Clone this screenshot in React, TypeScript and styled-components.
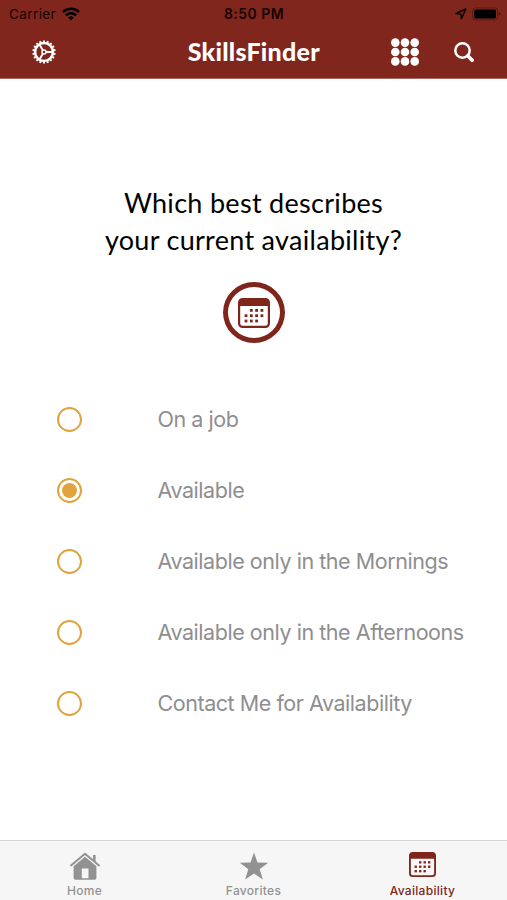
import React, { useState } from "react";
import styled, { createGlobalStyle } from "styled-components";

const OPTIONS = [
  "On a job",
  "Available",
  "Available only in the Mornings",
  "Available only in the Afternoons",
  "Contact Me for Availability",
];

const GearIcon: React.FC = () => {
  const teeth = Array.from({ length: 18 }, (_, i) => i * 20);
  return (
    <svg width="26" height="26" viewBox="-13 -13 26 26" fill="none" stroke="#fff">
      <circle r="8.9" strokeWidth="2.5" />
      {teeth.map((angle) => (
        <path key={angle} d="M0-9.5V-11.6" strokeWidth="2" transform={`rotate(${angle})`} />
      ))}
      <circle r="2" strokeWidth="1.5" />
      <path d="M2 0H9M-1.2-1.8L-4.7-7.7M-1.2 1.8L-4.7 7.7" strokeWidth="1.9" />
    </svg>
  );
};

const GridIcon: React.FC = () => (
  <svg width="30" height="30" viewBox="-15 -15 30 30" fill="#fff">
    {[-9.4, 0, 9.4].map((y) =>
      [-9.7, 0, 9.7].map((x) => <circle key={`${x},${y}`} cx={x} cy={y} r="4.3" />)
    )}
  </svg>
);

const SearchIcon: React.FC = () => (
  <svg width="22" height="22" viewBox="0 0 22 22" fill="none" stroke="#fff">
    <circle cx="9.5" cy="9.5" r="7.2" strokeWidth="2.5" />
    <path d="M14.7 14.7L19.2 19.2" strokeWidth="3.6" strokeLinecap="round" />
  </svg>
);

const WifiIcon: React.FC = () => (
  <svg width="18" height="14" viewBox="0 0 18 14" fill="none" stroke="#000" strokeWidth="2.5">
    <path d="M1 5.1A11.3 11.3 0 0 1 17 5.1" />
    <path d="M3.9 8.3A7.2 7.2 0 0 1 14.1 8.3" />
    <path d="M9 13.6L6.2 10.7A4 4 0 0 1 11.8 10.7Z" fill="#000" stroke="none" />
  </svg>
);

const LocationIcon: React.FC = () => (
  <svg width="12" height="12" viewBox="0 0 12 12" fill="none" stroke="#000" strokeWidth="1.4">
    <path d="M1 5.5L10.8 1L6.4 10.7L5.9 6.1Z" strokeLinejoin="round" />
  </svg>
);

const BatteryIcon: React.FC = () => (
  <svg width="30" height="14" viewBox="0 0 30 14">
    <rect x="0.6" y="0.9" width="25" height="12" rx="3" fill="none" stroke="#000" strokeOpacity="0.3" />
    <rect x="2.2" y="2.5" width="21.8" height="8.9" rx="1.6" />
    <path d="M26.7 4.9Q28.6 6 28.6 7T26.7 9.1Z" fillOpacity="0.4" />
  </svg>
);

const CalendarIcon: React.FC<{ width: number; height: number }> = ({ width, height }) => (
  <svg width={width} height={height} viewBox="0 0 32 30" preserveAspectRatio="none" fill="#80251b">
    <rect x="1.1" y="1.1" width="29.8" height="27.8" rx="3.5" fill="none" stroke="#80251b" strokeWidth="2.2" />
    <path d="M1 8V4Q1 1 4 1H28Q31 1 31 4V8Z" />
    {[12.4, 17.7, 23].map((y, row) =>
      [8, 13.3, 18.6, 23.9].map((x, col) =>
        (row === 0 && col === 0) || (row === 2 && col === 3) ? null : (
          <rect key={`${x},${y}`} x={x - 1.4} y={y - 1.4} width="2.8" height="2.8" />
        )
      )
    )}
  </svg>
);

const HomeIcon: React.FC = () => (
  <svg width="32" height="28" viewBox="0 0 32 28" fill="#929292">
    <path d="M2 13.4L16 1.7L30 13.4" fill="none" stroke="#929292" strokeWidth="2" strokeLinecap="round" strokeLinejoin="round" />
    <path d="M24 3H26.6V9.8L24 7.6Z" />
    <path d="M16 4.7L27.4 14.2V26Q27.4 27.8 25.6 27.8H6.4Q4.6 27.8 4.6 26V14.2ZM12.8 16.4V26.3H19.5V16.4Z" fillRule="evenodd" />
  </svg>
);

const StarIcon: React.FC = () => (
  <svg width="30" height="28" viewBox="0 0 30 28" fill="#929292">
    <path d="M15 0.4L18.5 10.6L29.2 10.8L20.7 17.3L23.9 27.6L15 21.4L6.1 27.6L9.3 17.3L0.8 10.8L11.5 10.6Z" />
  </svg>
);

const App: React.FC = () => {
  const [selected, setSelected] = useState<number>(1);

  return (
    <>
      <GlobalStyle />
      <Screen>
        <Header>
          <StatusBar>
            <Carrier>
              Carrier <WifiIcon />
            </Carrier>
            <Clock>8:50 PM</Clock>
            <StatusIcons>
              <LocationIcon />
              <BatteryIcon />
            </StatusIcons>
          </StatusBar>
          <NavBar>
            <NavGroup>
              <IconButton aria-label="Settings"><GearIcon /></IconButton>
            </NavGroup>
            <AppName>SkillsFinder</AppName>
            <NavGroup $end>
              <IconButton aria-label="Menu"><GridIcon /></IconButton>
              <IconButton aria-label="Search"><SearchIcon /></IconButton>
            </NavGroup>
          </NavBar>
        </Header>
        <Main>
          <Question>
            Which best describes
            <br />
            your current availability?
          </Question>
          <Badge>
            <CalendarIcon width={32} height={30} />
          </Badge>
          <OptionList role="radiogroup">
            {OPTIONS.map((label, index) => (
              <Option
                key={label}
                role="radio"
                aria-checked={selected === index}
                onClick={() => setSelected(index)}
              >
                <Radio>{selected === index && <RadioDot />}</Radio>
                <OptionLabel>{label}</OptionLabel>
              </Option>
            ))}
          </OptionList>
        </Main>
        <TabBar>
          <Tab>
            <TabIcon><HomeIcon /></TabIcon>
            Home
          </Tab>
          <Tab>
            <TabIcon><StarIcon /></TabIcon>
            Favorites
          </Tab>
          <Tab $active>
            <TabIcon><CalendarIcon width={27} height={25} /></TabIcon>
            Availability
          </Tab>
        </TabBar>
      </Screen>
    </>
  );
};

export default App;

const GlobalStyle = createGlobalStyle`
  * {
    box-sizing: border-box;
  }
  body {
    margin: 0;
    background: #fff;
    font-family: Inter, "Liberation Sans", sans-serif;
  }
  svg {
    display: block;
    flex-shrink: 0;
  }
`;

const Screen = styled.div`
  display: flex;
  flex-direction: column;
  height: 900px;
  overflow: hidden;
`;

const Header = styled.header`
  height: 79px;
  background-color: #80261c;
  border-bottom: 1px solid #a9675f;
`;

const StatusBar = styled.div`
  display: grid;
  grid-template-columns: 1fr auto 1fr;
  align-items: center;
  height: 27px;
  padding: 0 5px 0 9px;
  font-size: 13.5px;
  color: #160302;
`;

const Carrier = styled.div`
  display: flex;
  align-items: center;
  gap: 6px;
  letter-spacing: 0.4px;
`;

const Clock = styled.div`
  margin-right: 3px;
  font-size: 14px;
  font-weight: 600;
  letter-spacing: 0.45px;
`;

const StatusIcons = styled.div`
  display: flex;
  align-items: center;
  justify-content: flex-end;
  gap: 5px;
`;

const NavBar = styled.nav`
  display: grid;
  grid-template-columns: 1fr auto 1fr;
  align-items: center;
  height: 50px;
  padding: 0 32px 0 30.5px;
`;

const NavGroup = styled.div<{ $end?: boolean }>`
  display: flex;
  align-items: center;
  justify-content: ${({ $end }) => ($end ? "flex-end" : "flex-start")};
  gap: 33px;
`;

const IconButton = styled.button`
  padding: 0;
  border: none;
  background: none;
`;

const AppName = styled.h1`
  margin: 0 0 2px 2px;
  font-family: Lato, sans-serif;
  font-size: 25px;
  font-weight: 900;
  line-height: 30px;
  letter-spacing: 0.25px;
  color: #fff;
`;

const Main = styled.main`
  display: flex;
  flex: 1;
  flex-direction: column;
  align-items: center;
  padding-top: 105px;
`;

const Question = styled.h2`
  margin: 0;
  font-family: Lato, sans-serif;
  font-size: 27px;
  font-weight: 400;
  line-height: 37px;
  letter-spacing: 0.3px;
  text-align: center;
  color: #000;
`;

const Badge = styled.div`
  display: flex;
  align-items: center;
  justify-content: center;
  width: 62px;
  height: 61px;
  margin-top: 24px;
  border: 5px solid #80251b;
  border-radius: 50%;
`;

const OptionList = styled.div`
  display: flex;
  flex-direction: column;
  align-self: stretch;
  margin-top: 41px;
  padding-left: 57px;
`;

const Option = styled.div`
  display: flex;
  align-items: center;
  gap: 75.5px;
  height: 70.9px;
`;

const Radio = styled.span`
  display: flex;
  align-items: center;
  justify-content: center;
  width: 25px;
  height: 25px;
  border: 2px solid #dfa43c;
  border-radius: 50%;
`;

const RadioDot = styled.span`
  width: 15.5px;
  height: 15.5px;
  border-radius: 50%;
  background-color: #dfa43c;
`;

const OptionLabel = styled.span`
  font-size: 21.5px;
  letter-spacing: -0.45px;
  white-space: nowrap;
  color: #8e8e90;
`;

const TabBar = styled.footer`
  display: grid;
  grid-template-columns: repeat(3, 1fr);
  height: 60px;
  border-top: 1px solid #d6d6d6;
  background-color: #f6f6f6;
`;

const Tab = styled.div<{ $active?: boolean }>`
  display: flex;
  flex-direction: column;
  align-items: center;
  padding-top: 11px;
  font-size: 12px;
  font-weight: 500;
  line-height: 16px;
  letter-spacing: 0.3px;
  color: ${({ $active }) => ($active ? "#80251b" : "#929292")};
`;

const TabIcon = styled.span`
  display: flex;
  align-items: flex-start;
  justify-content: center;
  height: 31px;
`;
